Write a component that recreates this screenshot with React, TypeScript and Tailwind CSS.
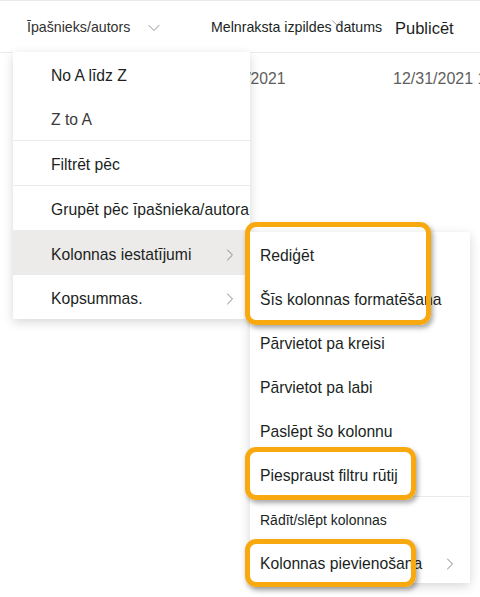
import { ChevronDown, ChevronRight } from "lucide-react"
import type React from "react"

const font = { fontFamily: '"Liberation Sans", Arial, sans-serif' }

function Item({
  label,
  active,
  sub,
  small,
  h = "h-[44px]",
}: {
  label: string
  active?: boolean
  sub?: boolean
  small?: boolean
  h?: string
}) {
  return (
    <div className={`${h} pt-[4px] flex items-center justify-between ${active ? "bg-[#edebe9]" : ""}`}>
      <span className={`${small ? "text-[14px]" : "text-[15.7px]"} text-[#201f1e] whitespace-nowrap`}>{label}</span>
      {sub && <ChevronRight className="w-[20px] h-[20px] text-[#7a7876] shrink-0" strokeWidth={1.1} />}
    </div>
  )
}

function Divider() {
  return <div className="h-px bg-[#edebe9]" />
}

function Highlight({ className }: { className: string }) {
  return (
    <div
      className={`absolute border-[5px] border-[#f8a910] rounded-[11px] shadow-[2px_3px_5px_rgba(0,0,0,0.35)] ${className}`}
    />
  )
}

export default function App() {
  return (
    <div className="relative w-[480px] h-[597px] overflow-hidden bg-white" style={font}>
      {/* header */}
      <div className="h-[53px] pt-[3px] flex items-center border-t border-b border-[#edebe9]">
        <div className="w-[211px] shrink-0 pl-[27px] flex items-center">
          <span className="text-[14.2px] text-[#323130]">Īpašnieks/autors</span>
          <ChevronDown className="ml-[14px] w-[20px] h-[20px] text-[#8a8886]" strokeWidth={1.1} />
        </div>
        <div className="w-[184px] shrink-0 relative flex items-center">
          <span className="text-[14.2px] text-[#201f1e] whitespace-nowrap">Melnraksta izpildes datums</span>
          <ChevronDown className="absolute left-[117px] top-[-3px] w-[18px] h-[18px] text-[#8a8886]" strokeWidth={1.1} />
        </div>
        <span className="text-[16.5px] text-[#201f1e] whitespace-nowrap">Publicēt</span>
      </div>

      {/* row */}
      <div className="h-[48px] pt-[3px] flex items-center overflow-hidden">
        <div className="w-[207px] shrink-0" />
        <span className="w-[186px] shrink-0 text-[15.7px] text-[#605e5c] whitespace-nowrap">12/31/2021</span>
        <span className="shrink-0 text-[16px] text-[#605e5c] whitespace-nowrap">12/31/2021 11:00</span>
      </div>

      {/* column menu */}
      <div className="absolute left-[13px] top-[52px] w-[237px] bg-white shadow-[0_3px_10px_rgba(0,0,0,0.16)]">
        <div className="pl-[38px] pr-[13px]">
          <Item label="No A līdz Z" />
        </div>
        <div className="pl-[38px] pr-[13px]">
          <span className="h-[44px] pt-[4px] flex items-center text-[15.7px] text-[#3b3a39]">Z to A</span>
        </div>
        <Divider />
        <div className="pl-[38px] pr-[13px]">
          <Item label="Filtrēt pēc" />
        </div>
        <Divider />
        <div className="pl-[38px]">
          <Item label="Grupēt pēc īpašnieka/autora" />
        </div>
        <div className="pl-[38px] pr-[10px] bg-[#edebe9]">
          <Item label="Kolonnas iestatījumi" sub h="h-[45px]" />
        </div>
        <div className="pl-[38px] pr-[10px]">
          <Item label="Kopsummas." sub />
        </div>
      </div>

      {/* submenu */}
      <div className="absolute left-[250px] top-[232px] w-[220px] bg-white shadow-[0_3px_10px_rgba(0,0,0,0.16)]">
        <div className="pl-[10px] pr-[10px]">
          <Item label="Rediģēt" />
          <Item label="Šīs kolonnas formatēšana" />
          <Item label="Pārvietot pa kreisi" />
          <Item label="Pārvietot pa labi" />
          <Item label="Paslēpt šo kolonnu" />
          <Item label="Piespraust filtru rūtij" />
        </div>
        <Divider />
        <div className="pl-[10px] pr-[10px]">
          <Item label="Rādīt/slēpt kolonnas" small h="h-[43px]" />
          <Item label="Kolonnas pievienošana" sub h="h-[43px]" />
        </div>
      </div>

      {/* callouts */}
      <Highlight className="left-[245px] top-[222px] w-[186px] h-[103px]" />
      <Highlight className="left-[245px] top-[447px] w-[171px] h-[53px]" />
      <Highlight className="left-[245px] top-[539px] w-[171px] h-[48px]" />
    </div>
  )
}
